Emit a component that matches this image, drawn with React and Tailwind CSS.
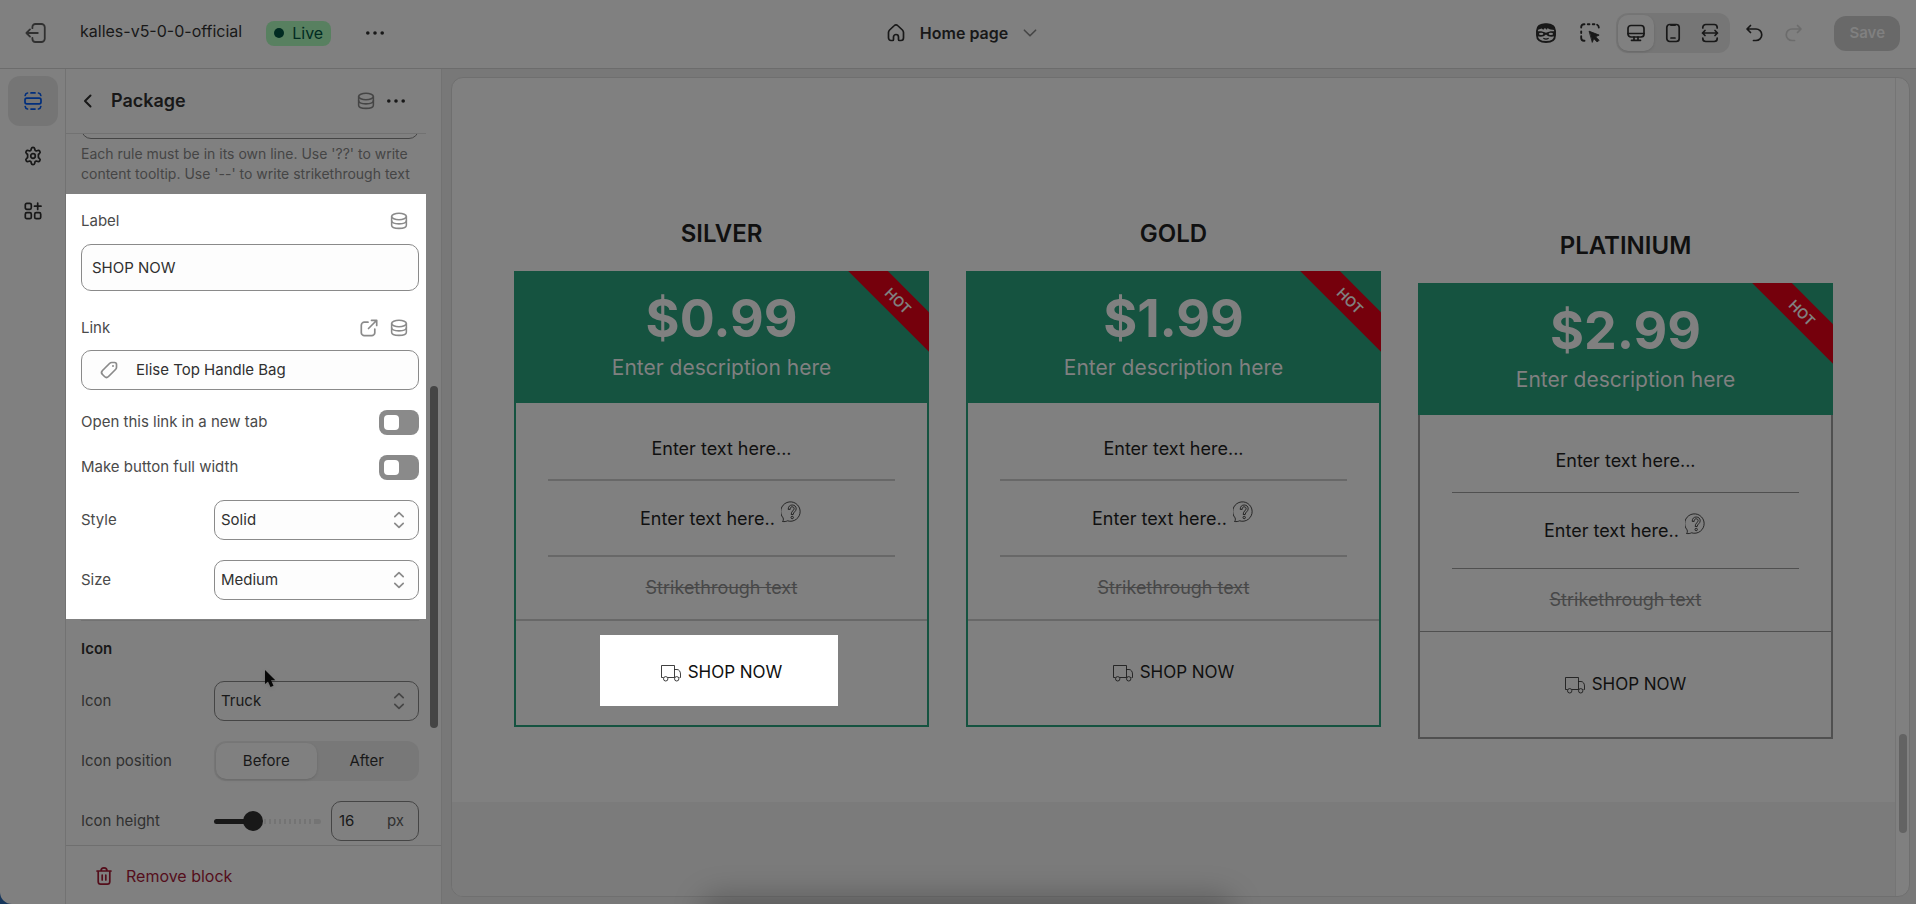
const plans = [
  { name: 'SILVER', price: '$0.99', spotlight: true },
  { name: 'GOLD', price: '$1.99' },
  { name: 'PLATINIUM', price: '$2.99', plain: true },
];

function Icon({ children, className = 'size-5', stroke = 1.7 }) {
  return (
    <svg
      viewBox="0 0 20 20"
      fill="none"
      stroke="currentColor"
      strokeWidth={stroke}
      strokeLinecap="round"
      strokeLinejoin="round"
      className={`shrink-0 ${className}`}
      aria-hidden="true"
    >
      {children}
    </svg>
  );
}

function DatabaseIcon() {
  return (
    <Icon className="size-[18px]">
      <ellipse cx="10" cy="5" rx="8.2" ry="3.6" />
      <path d="M1.8 5v9.600c0 2 3 3.600 8.200 3.600s8.200-1.600 8.200-3.600V5" />
      <path d="M1.800 9.800c0 2 3 3.400 8.200 3.400s8.200-1.400 8.200-3.400" />
    </Icon>
  );
}

function DotsIcon() {
  return (
    <Icon>
      <g fill="currentColor" stroke="none">
        <circle cx="2.8" cy="10" r="1.8" />
        <circle cx="10" cy="10" r="1.8" />
        <circle cx="17.2" cy="10" r="1.8" />
      </g>
    </Icon>
  );
}

function TruckIcon() {
  return (
    <svg
      viewBox="0 0 20 18"
      fill="none"
      stroke="currentColor"
      strokeWidth="0.8"
      className="h-[18px] w-5 shrink-0"
      aria-hidden="true"
    >
      <path d="M2.500 13.500h-2V1.500h13v12H7M13.500 5.500H16c2 0 3.500 2 3.500 4.500v3.500h-1" />
      <circle cx="4.700" cy="14.800" r="2.200" />
      <circle cx="15.700" cy="14.800" r="2.200" />
    </svg>
  );
}

function HelpBubbleIcon() {
  return (
    <svg viewBox="0 0 22 22" fill="none" stroke="currentColor" strokeWidth="0.8" className="size-[22px]" aria-hidden="true">
      <path d="M1.500 20.500c1-1 1-2 .6-3.600A9.700 9.700 0 1 1 6.500 19.800c-1.500.8-3 .9-5 .7Z" />
      <path d="M7.200 8.400C7.200 5.500 8.800 4 11.200 4s4 1.500 4 3.800c0 2.700-3 3.200-3 5.700h-2c0-3.500 2.900-4 2.900-5.800 0-1.200-.8-1.900-1.900-1.900-1.300 0-2 .9-2 2.600Z" />
      <circle cx="11.200" cy="16.500" r="1.200" />
    </svg>
  );
}

function Header() {
  return (
    <header className="flex h-[69px] shrink-0 items-center border-b border-[#6c6c6c] pr-4 pb-[2px] pl-6 text-[#181818]">
      <div className="flex flex-1 items-center">
        <button aria-label="Exit" className="text-[#303030]">
          <Icon className="size-6" stroke={1.5}>
            <path d="M7 6V5.200C7 3.700 8 2.500 9.500 2.500h5c1.500 0 2.800 1.200 2.800 2.700v9.600c0 1.500-1.300 2.700-2.800 2.700h-5C8 17.500 7 16.300 7 14.800V14M11.500 10H2M5 7l-3 3 3 3" />
          </Icon>
        </button>
        <span className="ml-8 pb-1 text-base">kalles-v5-0-0-official</span>
        <span className="ml-6 flex h-[25px] items-center gap-2 rounded-lg bg-[#588060] px-2 text-base text-[#012b22]">
          <span className="size-[10px] rounded-full bg-[#012b22]" />
          Live
        </span>
        <button aria-label="More actions" className="ml-[34px]">
          <DotsIcon />
        </button>
      </div>

      <button className="flex items-center gap-[14px] text-base font-semibold">
        <Icon>
          <path d="M2.500 9.500c0-1 .4-1.800 1.100-2.500l4.800-4.500c.9-.9 2.300-.9 3.200 0L16.400 7c.7.700 1.100 1.500 1.100 2.500v5.300c0 1.500-1 2.700-2.500 2.700h-1.500c-.6 0-1-.4-1-1V14a2.500 2.500 0 0 0-5 0v2.500c0 .6-.4 1-1 1H5c-1.500 0-2.500-1.200-2.500-2.700Z" />
        </Icon>
        Home page
        <Icon className="size-4 text-[#454545]" stroke={2}>
          <path d="m3 6.500 7 7 7-7" />
        </Icon>
      </button>

      <div className="flex flex-1 items-center justify-end">
        <button aria-label="Assistant">
          <Icon className="size-[22px]">
            <path d="M1.800 8c0-4 2.700-6 8.200-6s8.200 2 8.200 6v4c0 4-2.700 6.200-8.200 6.200S1.800 16 1.800 12Z" />
            <path d="M2 7.200C2 3.500 5 1.500 10 1.500s8 2 8 5.700c-3 0-5-.5-6.500-1.800L10.800 7 9 5.500 7.500 7 6 6Z" fill="currentColor" stroke="none" />
            <path d="M1.800 8.500c3-.5 6 0 8.200 1.300 2.200-1.300 5.200-1.800 8.200-1.300v4.200c-3.200 1.300-6 .8-8.200-1.300-2.200 2.100-5 2.600-8.200 1.300Z" fill="currentColor" stroke="none" />
            <ellipse cx="5.600" cy="10.800" rx="2" ry="1" fill="#808080" stroke="none" />
            <ellipse cx="14.400" cy="10.800" rx="2" ry="1" fill="#808080" stroke="none" />
            <path d="M8 15q2 1 4 0" strokeWidth="1.200" />
          </Icon>
        </button>
        <button aria-label="Select element" className="ml-[22px]">
          <Icon className="size-[22px]">
            <path d="M2 5V4.500A2.500 2.500 0 0 1 4.500 2H5M8 2h1.500M12.500 2H14M2 8.500V10M2 13v1.500A2.500 2.500 0 0 0 4.500 17H5M16.500 2.500c1 .5 1.500 1 1.500 2.500" />
            <path d="m9.500 8.500 8.800 3.400-3.300 1.500 3.200 3.200-1.600 1.600-3.200-3.200-1.200 3.200Z" fill="currentColor" strokeWidth="0.800" />
          </Icon>
        </button>
        <div className="ml-[15px] flex h-10 items-center gap-px rounded-xl bg-[#767676] p-[2px]">
          <button aria-label="Desktop" className="flex size-9 items-center justify-center rounded-[10px] bg-[#808080] shadow-sm">
            <Icon>
              <rect x="2" y="2.500" width="16" height="11.500" rx="3" />
              <path d="M2 10.500h16M8 14v3M12 14v3M5.500 17.300h9" />
            </Icon>
          </button>
          <button aria-label="Mobile" className="flex size-9 items-center justify-center">
            <Icon>
              <rect x="3.800" y="1.500" width="12.400" height="17" rx="3" />
              <path d="M8 2.200h4M8 15h4" />
            </Icon>
          </button>
          <button aria-label="Full width" className="flex size-9 items-center justify-center">
            <Icon>
              <path d="M2.800 5v-.5a3 3 0 0 1 3-3h8.400a3 3 0 0 1 3 3V5M2.800 15v.5a3 3 0 0 0 3 3h8.400a3 3 0 0 0 3-3V15M2.500 10h15M5 7.500 2.500 10 5 12.500M15 7.500l2.500 2.500-2.500 2.500" />
            </Icon>
          </button>
        </div>
        <button aria-label="Undo" className="ml-[14px]">
          <Icon>
            <path d="M6.500 2.500 3 6l3.500 3.500M3.500 6H12a5.500 5.500 0 0 1 0 11.500H9.500" />
          </Icon>
        </button>
        <button aria-label="Redo" disabled className="ml-5 text-[#6c6c6c]">
          <Icon>
            <path d="M13.500 2.500 17 6l-3.500 3.500M16.500 6H8a5.500 5.500 0 0 0 0 11.500h2.500" />
          </Icon>
        </button>
        <button disabled className="ml-[30px] h-[35px] rounded-xl bg-[#696969] px-[15px] text-[15px] font-semibold text-[#808080]">
          Save
        </button>
      </div>
    </header>
  );
}

function Rail() {
  return (
    <nav className="flex w-[66px] shrink-0 flex-col items-center gap-[5px] border-r border-[#727272] pt-[7px] text-[#181818]">
      <button aria-label="Sections" className="flex size-[50px] items-center justify-center rounded-xl bg-[#757575] text-[#002e7d]">
        <Icon>
          <rect x="2" y="7.200" width="16" height="5.600" rx="1.800" />
          <path d="M2.200 4.500C2.400 3 3.300 2.200 4.500 2M8 1.900h4M15.500 2c1.200.2 2.100 1 2.300 2.500M2.200 15.500c.2 1.500 1.100 2.300 2.300 2.500M8 18.100h4M15.500 18c1.200-.2 2.100-1 2.300-2.500" />
        </Icon>
      </button>
      <button aria-label="Theme settings" className="flex size-[50px] items-center justify-center">
        <Icon>
          <path d="M8.300 2.700c.2-.9.700-1.300 1.700-1.300s1.500.4 1.700 1.300l.3 1.500 1.300.8 1.500-.5c.9-.3 1.500 0 2 .8s.5 1.500-.2 2.100L15.400 8.500v3l1.200 1.100c.7.600.7 1.300.2 2.100s-1.100 1.100-2 .8l-1.500-.5-1.300.8-.3 1.500c-.2.900-.7 1.300-1.700 1.300s-1.500-.4-1.700-1.300L8 15.800l-1.300-.8-1.500.5c-.9.300-1.500 0-2-.8s-.5-1.500.2-2.100l1.200-1.100v-3L3.400 7.400c-.7-.6-.7-1.300-.2-2.100s1.100-1.100 2-.8l1.500.5L8 4.200Z" />
          <circle cx="10" cy="10" r="2.300" />
        </Icon>
      </button>
      <button aria-label="App embeds" className="flex size-[50px] items-center justify-center">
        <Icon>
          <rect x="2.300" y="2.300" width="6" height="6" rx="1.500" />
          <rect x="2.300" y="11.700" width="6" height="6" rx="1.500" />
          <rect x="11.700" y="11.700" width="6" height="6" rx="1.500" />
          <path d="M14.700 2v6.500M11.500 5.200H18" />
        </Icon>
      </button>
    </nav>
  );
}

function SelectRow({ id, label, value, dim }) {
  return (
    <div className="flex h-10 items-center">
      <label htmlFor={id} className="w-[133px] shrink-0">
        {label}
      </label>
      <div className="relative h-full flex-1">
        <select
          id={id}
          className={`h-full w-full appearance-none rounded-[10px] border px-[6px] ${
            dim ? 'border-[#454545] text-[#181818]' : 'border-[#8a8a8a] bg-[#fdfdfd] text-[#303030]'
          }`}
        >
          <option>{value}</option>
        </select>
        <Icon className={`pointer-events-none absolute top-[10px] right-[10px] size-5 ${dim ? 'text-[#454545]' : 'text-[#8a8a8a]'}`}>
          <path d="m5.800 6.700 4.200-4 4.200 4M5.800 13.300l4.200 4 4.200-4" />
        </Icon>
      </div>
    </div>
  );
}

function ToggleRow({ label }) {
  return (
    <label className="flex h-[25px] items-center justify-between">
      {label}
      <input
        type="checkbox"
        role="switch"
        className="h-[25px] w-10 appearance-none rounded-lg bg-[#8a8a8a] p-[5px] before:block before:size-[15px] before:rounded before:bg-white"
      />
    </label>
  );
}

function Panel() {
  return (
    <aside className="relative flex w-[376px] shrink-0 flex-col border-r border-[#727272] text-[15px] text-[#303030]">
      <div className="mr-[15px] flex h-[65px] shrink-0 items-center border-b border-[#727272] pr-5 pl-3 text-[#181818]">
        <button aria-label="Back">
          <Icon stroke={2}>
            <path d="M12.500 4.500 7 10l5.500 5.500" />
          </Icon>
        </button>
        <h2 className="ml-[13px] flex-1 text-lg font-semibold">Package</h2>
        <button aria-label="Connect data source" className="text-[#454545]">
          <DatabaseIcon />
        </button>
        <button aria-label="Block actions" className="ml-[11px]">
          <DotsIcon />
        </button>
      </div>

      <div className="mr-[15px] min-h-0 flex-1 overflow-hidden">
        <div className="pr-[7px] pl-[15px]">
          <textarea
            aria-label="Rules"
            className="-mt-[35px] block h-10 w-full resize-none rounded-[10px] border border-[#454545]"
          />
          <p className="mt-[5px] mb-[10px] text-sm leading-5 text-[#454545]">
            Each rule must be in its own line. Use &apos;??&apos; to write content tooltip. Use &apos;--&apos; to write strikethrough text
          </p>
        </div>

        <div className="flex flex-col gap-5 bg-white pt-[11px] pr-[7px] pb-[19px] pl-[15px] text-[#4a4a4a]">
          <div>
            <div className="flex h-8 items-center">
              <label htmlFor="label" className="flex-1">
                Label
              </label>
              <button aria-label="Connect label" className="mr-[11px] text-[#8a8a8a]">
                <DatabaseIcon />
              </button>
            </div>
            <input
              id="label"
              defaultValue="SHOP NOW"
              className="mt-[7px] block h-[47px] w-full rounded-[10px] border border-[#8a8a8a] bg-[#fdfdfd] px-[10px] text-[#303030]"
            />
          </div>
          <div>
            <div className="flex h-[34px] items-center text-[#8a8a8a]">
              <span className="flex-1 text-[#4a4a4a]">Link</span>
              <button aria-label="Open link">
                <Icon>
                  <path d="M12.500 2.300h5.200v5.200M17.500 2.500l-8 8M9 4.200H5.300c-1.500 0-3 1.200-3 3v7.500c0 1.500 1.500 3 3 3h7.500c1.500 0 3-1.500 3-3V11" />
                </Icon>
              </button>
              <button aria-label="Connect link" className="mr-[11px] ml-[11px]">
                <DatabaseIcon />
              </button>
            </div>
            <button className="mt-[5px] flex h-10 w-full items-center rounded-[10px] border border-[#8a8a8a] bg-[#fdfdfd] pl-[17px] text-[#303030]">
              <Icon className="size-5 text-[#8a8a8a]">
                <path d="M10.500 3.500c.7-.7 1.300-1 2.300-1h2.700c1.200 0 2 .8 2 2v2.700c0 1-.3 1.600-1 2.300l-7 7c-1.300 1.300-2.700 1.300-4 0l-2-2c-1.300-1.300-1.300-2.700 0-4Z" />
                <circle cx="14" cy="6" r="1" fill="currentColor" stroke="none" />
              </Icon>
              <span className="ml-[17px]">Elise Top Handle Bag</span>
            </button>
          </div>
          <ToggleRow label="Open this link in a new tab" />
          <ToggleRow label="Make button full width" />
          <SelectRow id="style" label="Style" value="Solid" />
          <SelectRow id="size" label="Size" value="Medium" />
        </div>

        <div className="flex flex-col gap-5 pt-px pr-[7px] pb-1 pl-[15px]">
          <h3 className="border-t border-[#727272] pt-[18px] pb-[2px] text-[15px] leading-5 font-semibold text-[#181818]">
            Icon
          </h3>
          <SelectRow id="icon" label="Icon" value="Truck" dim />
          <div className="flex h-10 items-center">
            <span className="w-[133px] shrink-0">Icon position</span>
            <div className="flex h-full flex-1 rounded-xl bg-[#787878] p-[2px] text-[#181818]">
              <button className="flex-1 rounded-[10px] bg-[#808080] shadow-sm">Before</button>
              <button className="flex-1">After</button>
            </div>
          </div>
          <div className="flex h-10 items-center">
            <label htmlFor="height" className="w-[133px] shrink-0">
              Icon height
            </label>
            <div className="relative flex h-5 w-[107px] items-center">
              <div className="h-[5px] w-10 rounded-full bg-[#181818]" />
              <div className="h-[5px] flex-1 bg-[repeating-linear-gradient(90deg,#747474_0_2px,transparent_2px_5px)]" />
              <div className="h-[5px] w-[7px] rounded-r-full bg-[#747474]" />
              <input
                id="height"
                type="range"
                min="10"
                max="28"
                defaultValue="16"
                className="absolute inset-0 w-full appearance-none bg-transparent [&::-webkit-slider-thumb]:size-5 [&::-webkit-slider-thumb]:appearance-none [&::-webkit-slider-thumb]:rounded-full [&::-webkit-slider-thumb]:bg-[#181818]"
              />
            </div>
            <div className="ml-[10px] flex h-full min-w-0 flex-1 items-center rounded-[10px] border border-[#454545] pr-[14px] pl-[7px]">
              <input aria-label="Icon height in pixels" defaultValue="16" className="min-w-0 flex-1 text-[#181818]" />
              <span>px</span>
            </div>
          </div>
        </div>
      </div>

      <div className="flex h-[59px] shrink-0 items-center border-t border-[#6f6f6f] pt-px pl-7">
        <button className="flex items-center gap-3 text-base text-[#540e1b]">
          <Icon>
            <path d="M3 5h14M7 4.800a3 3 0 0 1 6 0M4.200 5v10.500c0 1.500 1 2.700 2.500 2.700h6.600c1.500 0 2.500-1.200 2.500-2.700V5M8.200 9v5M11.800 9v5" />
          </Icon>
          Remove block
        </button>
      </div>

      <div className="absolute top-[317px] right-[3px] h-[342px] w-2 rounded-full bg-[#454545]" />
    </aside>
  );
}

function PlanCard({ plan }) {
  const { name, price, spotlight, plain } = plan;
  const line = plain ? 'border-b border-[#505050]' : 'border-b-2 border-[#686868]';

  return (
    <article className={`flex-1 text-lg text-[#101010] ${plain ? 'mt-3' : ''}`}>
      <h3 className="text-center text-2xl leading-10 font-semibold">{name}</h3>
      <div className="relative mt-[17px] flex h-[132px] flex-col items-center overflow-hidden bg-[#155340] text-[#808080]">
        <p className="mt-5 text-[52px] leading-[56px] font-bold">{price}</p>
        <p className="mt-[9px] text-[21px] leading-6">Enter description here</p>
        <span className="absolute top-4 -right-[39px] flex h-7 w-[140px] rotate-45 items-center justify-center bg-[#75000c] text-sm font-semibold">
          HOT
        </span>
      </div>
      <div className={`border-2 border-t-0 ${plain ? 'border-[#505050]' : 'border-[#155340]'}`}>
        <ul className="px-8 text-center">
          <li className={`h-[78px] pt-8 leading-7 ${line}`}>Enter text here...</li>
          <li className={`flex h-[76px] justify-center gap-[6px] pt-5 leading-7 ${line}`}>
            <span className="pt-1">Enter text here..</span>
            <HelpBubbleIcon />
          </li>
          <li className="h-[62px] pt-[17px] leading-7 text-[#484848] line-through">Strikethrough text</li>
        </ul>
        <div className={line} />
        <div className={`flex h-[104px] justify-center ${plain ? 'mt-px' : ''}`}>
          <button
            className={`mt-[14px] mr-[5px] flex h-[71px] w-[238px] items-center justify-center gap-[7px] pt-1 pl-[5px] text-[17px] ${
              spotlight ? 'bg-white' : ''
            }`}
          >
            <TruckIcon />
            SHOP NOW
          </button>
        </div>
      </div>
    </article>
  );
}

function Preview() {
  return (
    <main className="min-w-0 flex-1 bg-[#787878] pt-2 pr-[6px] pb-[7px] pl-[9px]">
      <div className="flex h-full overflow-hidden rounded-xl border border-[#6f6f6f] bg-[#808080]">
        <div className="flex min-w-0 flex-1 flex-col">
          <div className="flex h-[724px] shrink-0 items-start gap-[37px] px-[62px] pt-[136px]">
            {plans.map((plan) => (
              <PlanCard key={plan.name} plan={plan} />
            ))}
          </div>
          <div className="flex-1 bg-[#7b7b7b]" />
        </div>
        <div className="w-[14px] border-l border-[#757575] pt-[656px]">
          <div className="mx-auto h-[99px] w-2 rounded-full bg-[#636363]" />
        </div>
      </div>
    </main>
  );
}

export default function App() {
  return (
    <div className="relative h-screen overflow-hidden bg-[#16365c] font-['Inter','Liberation_Sans',sans-serif]">
      <div className="flex h-full flex-col overflow-hidden rounded-bl-xl bg-[#808080]">
        <Header />
        <div className="flex min-h-0 flex-1">
          <Rail />
          <Panel />
          <Preview />
        </div>
      </div>
      {/* shadow cast by the dock below the window */}
      <div className="pointer-events-none absolute right-[36%] -bottom-5 left-[37%] h-5 rounded-full shadow-[0_0_30px_8px_rgba(0,0,0,0.25)]" />
      <svg viewBox="0 0 16 24" className="absolute top-[670px] left-[265px] h-6 w-4 drop-shadow" aria-hidden="true">
        <path d="M0 0v14l3-2.500 2.500 5.500 3-1.300L6 10.300h4.300Z" fill="#080808" />
      </svg>
    </div>
  );
}
